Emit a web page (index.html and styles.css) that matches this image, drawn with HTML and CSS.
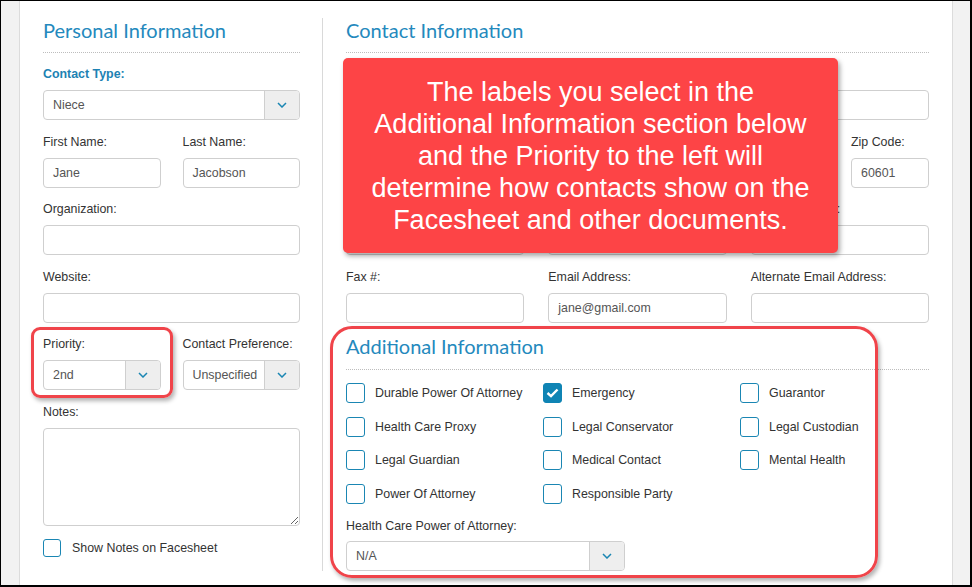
FILE: index.html
```html
<!DOCTYPE html>
<html lang="en">
<head>
<meta charset="utf-8">
<title>Contact</title>
<link rel="stylesheet" href="styles.css">
</head>
<body>
<div class="frame">
  <div class="panel">
    <section class="col col-left">
      <h2 class="section-title">Personal Information</h2>

      <div class="field">
        <label class="label label-strong">Contact Type:</label>
        <div class="select"><span class="select-value">Niece</span><span class="select-caret"><svg width="10" height="6" viewBox="0 0 10 6"><path d="M1 1 L5 5 L9 1" fill="none" stroke="#1a86b3" stroke-width="1.5"/></svg></span></div>
      </div>

      <div class="grid2">
        <div class="field">
          <label class="label">First Name:</label>
          <div class="input">Jane</div>
        </div>
        <div class="field">
          <label class="label">Last Name:</label>
          <div class="input">Jacobson</div>
        </div>
      </div>

      <div class="field">
        <label class="label">Organization:</label>
        <div class="input"></div>
      </div>

      <div class="field">
        <label class="label">Website:</label>
        <div class="input"></div>
      </div>

      <div class="grid2">
        <div class="field">
          <label class="label">Priority:</label>
          <div class="select"><span class="select-value">2nd</span><span class="select-caret"><svg width="10" height="6" viewBox="0 0 10 6"><path d="M1 1 L5 5 L9 1" fill="none" stroke="#1a86b3" stroke-width="1.5"/></svg></span></div>
        </div>
        <div class="field">
          <label class="label">Contact Preference:</label>
          <div class="select"><span class="select-value">Unspecified</span><span class="select-caret"><svg width="10" height="6" viewBox="0 0 10 6"><path d="M1 1 L5 5 L9 1" fill="none" stroke="#1a86b3" stroke-width="1.5"/></svg></span></div>
        </div>
      </div>

      <div class="field">
        <label class="label">Notes:</label>
        <textarea class="textarea"></textarea>
      </div>

      <div class="check-row">
        <span class="check check-sm"></span>
        <span class="check-label">Show Notes on Facesheet</span>
      </div>
    </section>

    <div class="divider"></div>

    <section class="col col-right">
      <h2 class="section-title">Contact Information</h2>

      <div class="field">
        <label class="label">Address:</label>
        <div class="input"></div>
      </div>

      <div class="grid-city">
        <div class="field">
          <label class="label">City:</label>
          <div class="input"></div>
        </div>
        <div class="field">
          <label class="label">State:</label>
          <div class="input"></div>
        </div>
        <div class="field">
          <label class="label">Zip Code:</label>
          <div class="input">60601</div>
        </div>
      </div>

      <div class="grid3">
        <div class="field">
          <label class="label">Home Phone #:</label>
          <div class="input"></div>
        </div>
        <div class="field">
          <label class="label">Work Phone #:</label>
          <div class="input"></div>
        </div>
        <div class="field">
          <label class="label">Mobile Phone #:</label>
          <div class="input"></div>
        </div>
      </div>

      <div class="grid3">
        <div class="field">
          <label class="label">Fax #:</label>
          <div class="input"></div>
        </div>
        <div class="field">
          <label class="label">Email Address:</label>
          <div class="input">jane@gmail.com</div>
        </div>
        <div class="field">
          <label class="label">Alternate Email Address:</label>
          <div class="input"></div>
        </div>
      </div>

      <h2 class="section-title section-title-sub">Additional Information</h2>

      <div class="checks">
        <div class="check-row"><span class="check"></span><span class="check-label">Durable Power Of Attorney</span></div>
        <div class="check-row"><span class="check check-on"><svg width="13" height="10" viewBox="0 0 13 10"><path d="M1.5 5 L5 8.2 L11.5 1.5" fill="none" stroke="#fff" stroke-width="2.4"/></svg></span><span class="check-label">Emergency</span></div>
        <div class="check-row"><span class="check"></span><span class="check-label">Guarantor</span></div>
        <div class="check-row"><span class="check"></span><span class="check-label">Health Care Proxy</span></div>
        <div class="check-row"><span class="check"></span><span class="check-label">Legal Conservator</span></div>
        <div class="check-row"><span class="check"></span><span class="check-label">Legal Custodian</span></div>
        <div class="check-row"><span class="check"></span><span class="check-label">Legal Guardian</span></div>
        <div class="check-row"><span class="check"></span><span class="check-label">Medical Contact</span></div>
        <div class="check-row"><span class="check"></span><span class="check-label">Mental Health</span></div>
        <div class="check-row"><span class="check"></span><span class="check-label">Power Of Attorney</span></div>
        <div class="check-row"><span class="check"></span><span class="check-label">Responsible Party</span></div>
      </div>

      <div class="field field-hcpoa">
        <label class="label label-tight">Health Care Power of Attorney:</label>
        <div class="select select-hcpoa"><span class="select-value">N/A</span><span class="select-caret"><svg width="10" height="6" viewBox="0 0 10 6"><path d="M1 1 L5 5 L9 1" fill="none" stroke="#1a86b3" stroke-width="1.5"/></svg></span></div>
      </div>
    </section>
  </div>

  <div class="callout">The labels you select in the<br>Additional Information section below<br>and the Priority to the left will<br>determine how contacts show on the<br>Facesheet and other documents.</div>
  <div class="highlight highlight-priority"></div>
  <div class="highlight highlight-additional"></div>
</div>
</body>
</html>
```

FILE: styles.css
```css
* { box-sizing: border-box; }

html, body {
  margin: 0;
  padding: 0;
}

body {
  font-family: "Liberation Sans", Arial, sans-serif;
  font-size: 12.4px;
  color: #333;
  background: #fff;
}

.frame {
  position: relative;
  width: 972px;
  height: 587px;
  border-style: solid;
  border-color: #000;
  border-width: 1px 2px 2px 1px;
  background: #f2f2f2;
  padding: 0 17px 0 18px;
  overflow: hidden;
}

.panel {
  display: flex;
  width: 934px;
  height: 100%;
  background: #fff;
  border-left: 1px solid #dcdcdc;
  border-right: 1px solid #dcdcdc;
  padding: 17px 23px 0 23px;
}

.col-left {
  width: 257px;
  flex: none;
}

.divider {
  width: 1px;
  height: 553px;
  background: #d9d9d9;
  margin: 0 23px 0 22px;
  flex: none;
}

.col-right {
  flex: 1;
  min-width: 0;
}

.section-title {
  margin: 0 0 13px;
  font-family: Lato, "Open Sans", sans-serif;
  font-weight: 400;
  font-size: 20px;
  line-height: 24px;
  color: #2489bd;
  padding-bottom: 10px;
  border-bottom: 1px dotted #bdbdbd;
}

.section-title-sub {
  margin-top: -2px;
  padding-bottom: 11px;
  margin-bottom: 13px;
}

.field {
  margin-bottom: 13.5px;
  min-width: 0;
}

.label {
  display: block;
  line-height: 16px;
  margin-bottom: 8px;
  color: #333;
  white-space: nowrap;
}

.label-tight {
  margin-bottom: 7px;
}

.label-strong {
  font-weight: bold;
  color: #1d82b3;
}

.input,
.select {
  height: 30px;
  border: 1px solid #cfcfcf;
  border-radius: 4px;
  background: #fff;
  color: #555;
  line-height: 28px;
  padding: 0 9px;
  white-space: nowrap;
  overflow: hidden;
}

.select {
  display: flex;
  padding: 0;
}

.select-value {
  flex: 1;
  padding: 0 9px;
  min-width: 0;
  overflow: hidden;
}

.select-caret {
  flex: none;
  width: 35px;
  background: #eeeeee;
  border-left: 1px solid #cfcfcf;
  display: flex;
  align-items: center;
  justify-content: center;
}

.grid2 {
  display: grid;
  grid-template-columns: minmax(0, 1fr) minmax(0, 1fr);
  column-gap: 22px;
}

.grid3 {
  display: grid;
  grid-template-columns: minmax(0, 1fr) minmax(0, 1fr) minmax(0, 1fr);
  column-gap: 24px;
}

.grid-city {
  display: grid;
  grid-template-columns: minmax(0, 1fr) 180px 78px;
  column-gap: 22px;
}

.textarea {
  display: block;
  width: 100%;
  height: 98px;
  border: 1px solid #cfcfcf;
  border-radius: 4px;
  margin: 0;
  padding: 6px 9px;
  font: inherit;
  resize: vertical;
}

.check-row {
  display: flex;
  align-items: center;
  height: 20px;
  white-space: nowrap;
}

.col-left > .check-row {
  margin-top: -1px;
}

.check {
  flex: none;
  width: 19px;
  height: 20px;
  border: 1.5px solid #1a86b3;
  border-radius: 3px;
  margin-right: 10px;
  display: flex;
  align-items: center;
  justify-content: center;
  background: #fff;
}

.check-sm {
  width: 18px;
  height: 18px;
  margin-right: 11px;
}

.check-on {
  background: #0f84b4;
  border-color: #0f84b4;
}

.check-label {
  color: #333;
}

.checks {
  display: grid;
  grid-template-columns: 197px 197px 1fr;
  row-gap: 13.5px;
}

.field-hcpoa {
  margin-top: 14px;
}

.select-hcpoa {
  width: 279px;
}

.callout {
  position: absolute;
  left: 342px;
  top: 57px;
  width: 495px;
  height: 195px;
  background: #fd4446;
  border-radius: 5px;
  box-shadow: 2px 3px 5px rgba(0, 0, 0, 0.35);
  color: #fff;
  font-family: "Liberation Sans", Arial, sans-serif;
  font-size: 27px;
  line-height: 32px;
  text-align: center;
  padding-top: 18px;
  white-space: nowrap;
}

.highlight {
  position: absolute;
  border: 3px solid #f0444a;
  box-shadow: 2px 3px 4px rgba(0, 0, 0, 0.3);
}

.highlight-priority {
  left: 30px;
  top: 326px;
  width: 142px;
  height: 71px;
  border-radius: 9px;
}

.highlight-additional {
  left: 329px;
  top: 325px;
  width: 548px;
  height: 252px;
  border-radius: 22px;
}
```
